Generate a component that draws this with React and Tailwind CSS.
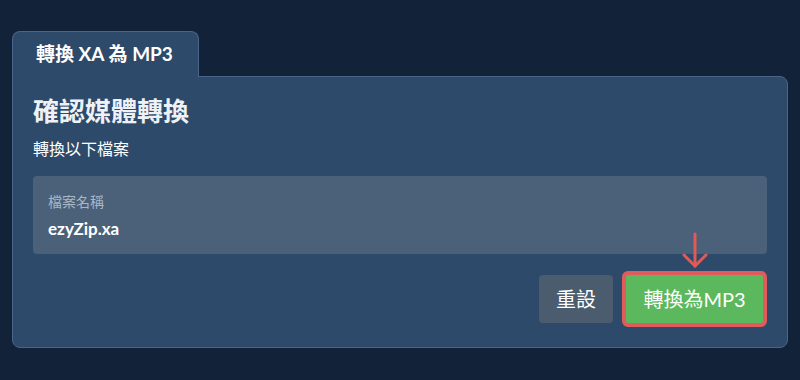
import React from 'react';

const font = { fontFamily: '"Lato", "Noto Sans CJK TC", sans-serif' };

export default function App() {
  return (
    <div className="w-[800px] h-[380px] bg-[#112239] px-[12px] pt-[31px]" style={font}>
      <div className="relative z-10 -mb-px w-[187px] h-[46px] rounded-t-lg border border-b-0 border-[#4a6587] bg-[#2d4a6b] flex items-center pl-[23px]">
        <span className="text-white text-[19px] font-bold">轉換 XA 為 MP3</span>
      </div>
      <div className="w-[776px] h-[272px] rounded-b-lg rounded-tr-lg border border-[#4a6587] bg-[#2d4a6b] px-[20px] pt-[18px]">
        <h1 className="text-[#eef2f6] text-[26px] font-bold leading-[32px]">確認媒體轉換</h1>
        <p className="text-white text-[16px] mt-[12px] leading-[20px]">轉換以下檔案</p>
        <div className="mt-[17px] h-[78px] rounded bg-[#4b6079] px-[15px] pt-[17px]">
          <div className="text-[#a9b6c4] text-[14px] leading-[18px]">檔案名稱</div>
          <div className="text-white text-[17px] font-bold leading-[20px] mt-[8px]">ezyZip.xa</div>
        </div>
        <div className="flex justify-end items-center gap-[9px] mt-[17px]">
          <button className="w-[74px] h-[48px] rounded bg-[#4b5c6f] text-white text-[20px]">重設</button>
          <div className="relative">
            <svg className="absolute left-1/2 -translate-x-1/2 -top-[39px]" width="26" height="38" viewBox="0 0 26 38" fill="none" stroke="#e05a5a" strokeWidth="3" strokeLinecap="round" strokeLinejoin="round">
              <path d="M13 2 V34" />
              <path d="M2 23 L13 34 L24 23" />
            </svg>
            <button className="w-[145px] h-[56px] rounded-md border-[4px] border-[#e05c5c] bg-[#5cb85c] text-white text-[20px]">轉換為MP3</button>
          </div>
        </div>
      </div>
    </div>
  );
}
